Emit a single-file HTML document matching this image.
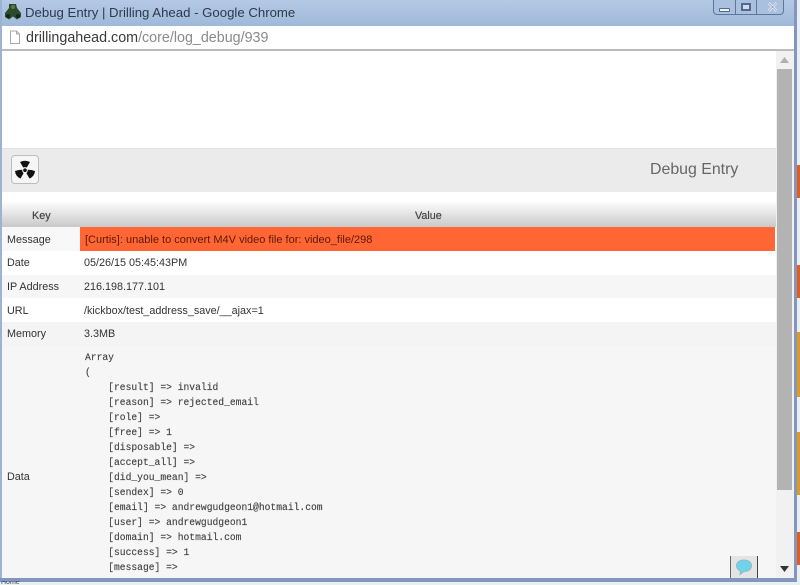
<!DOCTYPE html>
<html><head><meta charset="utf-8"><style>
html,body{margin:0;padding:0}
body{width:800px;height:585px;overflow:hidden;position:relative;background:#fff;font-family:"Liberation Sans",sans-serif}
.a{position:absolute}
.t{position:absolute;white-space:nowrap;font-size:10.8px;line-height:14px;color:#333}
.m{position:absolute;left:85px;white-space:pre;font:9.67px/15px "Liberation Mono",monospace;color:#3c3c3c;height:15px;-webkit-text-stroke:.15px #555}
</style></head><body>
<!-- window frame -->
<div class="a" style="left:0;top:0;width:797px;height:26px;background:linear-gradient(#b4c9e4,#9fb9da)"></div>
<div class="a" style="left:0;top:0;width:2px;height:580px;background:#9db3d3"></div>
<div class="a" style="left:794px;top:0;width:3px;height:580px;background:#8496bd"></div>
<div class="a" style="left:797px;top:0;width:3px;height:585px;background:#e8eef5"></div>
<div class="a" style="left:797px;top:165px;width:3px;height:33px;background:#dd5f24"></div>
<div class="a" style="left:797px;top:265px;width:3px;height:33px;background:#dd5f24"></div>
<div class="a" style="left:797px;top:332px;width:3px;height:65px;background:#dc9a26"></div>
<div class="a" style="left:797px;top:432px;width:3px;height:63px;background:#dc9a26"></div>
<div class="a" style="left:797px;top:532px;width:3px;height:33px;background:#dd5f24"></div>
<!-- title -->
<svg class="a" style="left:4px;top:3px" width="18" height="18" viewBox="0 0 18 18"><path d="M5 1h7l1 4 4 5v4l-4 2.500-4-3-4 3-4-2.500v-4l4-5z" fill="#2d4a2c"/><circle cx="9" cy="4" r="2" fill="#5d7a45"/><circle cx="4" cy="13" r="2" fill="#16261a"/><circle cx="14" cy="13" r="2" fill="#16261a"/></svg>
<div class="t" style="left:25px;top:4px;font-size:13.2px;line-height:18px;color:#2c3a4c">Debug Entry | Drilling Ahead - Google Chrome</div>
<!-- window controls -->
<div class="a" style="left:713px;top:0;width:69px;height:14px;background:#a9c1df;border:1px solid #5d7797;border-top:0;border-radius:0 0 4px 4px"></div>
<div class="a" style="left:735px;top:0;width:1px;height:14px;background:#5d7797"></div>
<div class="a" style="left:756px;top:0;width:1px;height:14px;background:#5d7797"></div>
<div class="a" style="left:719px;top:8px;width:9px;height:2px;background:#eef3f8;border:1px solid #53688a;border-radius:1px"></div>
<div class="a" style="left:741px;top:3px;width:6px;height:4px;background:#cfdcec;border:2px solid #53688a"></div>
<svg class="a" style="left:767px;top:2px" width="11" height="10" viewBox="0 0 11 10"><path d="M1.500 1L9.500 9M9.500 1L1.500 9" stroke="#e8eef5" stroke-width="2.500"/><path d="M1.500 1L9.500 9M9.500 1L1.500 9" stroke="#7d93b3" stroke-width=".6"/></svg>
<!-- address bar -->
<div class="a" style="left:2px;top:26px;width:792px;height:23px;background:#fff;border-bottom:2px solid #bdb9c0"></div>
<svg class="a" style="left:9px;top:30px" width="12" height="15" viewBox="0 0 12 15"><path d="M1.500 1h6l3 3v9.500h-9z" fill="#fff" stroke="#a8a8a8"/><path d="M7.500 1v3h3" fill="none" stroke="#a8a8a8"/></svg>
<div class="t" style="left:26px;top:28px;font-size:14.3px;line-height:20px;color:#3a3a3a">drillingahead.com<span style="color:#8a8a8a">/core/log_debug/939</span></div>
<!-- page -->
<div class="a" style="left:2px;top:51px;width:774px;height:97px;background:#fff"></div>
<div class="a" style="left:2px;top:148px;width:774px;height:44px;background:#ebebeb;border-top:1px solid #e2e2e2;box-sizing:border-box"></div>
<div class="a" style="left:11px;top:155px;width:26px;height:27px;background:#f6f6f6;border:1px solid #bdbdbd;border-radius:4px"></div>
<svg class="a" style="left:14px;top:159px" width="22" height="22" viewBox="0 0 22 22"><path d="M6 3Q11 .5 16 3L12.800 8.500Q11 7.800 9.200 8.500z" fill="#111"/><path d="M1 12Q5 10.800 8.200 10.800Q8.200 13 9.600 14.200L6.500 19.500Q1.500 17.500 1 12z" fill="#111"/><path d="M21 12Q17 10.800 13.800 10.800Q13.800 13 12.400 14.200L15.500 19.500Q20.500 17.500 21 12z" fill="#111"/><circle cx="11" cy="11.200" r="1.800" fill="#111"/></svg>
<div class="t" style="left:650px;top:160px;font-size:15.9px;line-height:20px;color:#666">Debug Entry</div>
<!-- table header -->
<div class="a" style="left:2px;top:192px;width:774px;height:35px;background:linear-gradient(#fff 0,#fff 25%,#c9c9c9 100%)"></div>
<div class="t" style="left:32px;top:209px;color:#444;text-shadow:0 0 .5px #555">Key</div>
<div class="t" style="left:415px;top:209px;color:#444;text-shadow:0 0 .5px #555">Value</div>
<!-- rows -->
<div class="a" style="left:2px;top:227px;width:78px;height:24px;background:#f8f8f8"></div>
<div class="a" style="left:80px;top:227px;width:695px;height:24px;background:#ff6633"></div>
<div class="a" style="left:2px;top:251px;width:774px;height:24px;background:#fff"></div>
<div class="a" style="left:2px;top:275px;width:774px;height:23px;background:#f6f6f6"></div>
<div class="a" style="left:2px;top:298px;width:774px;height:24px;background:#fff"></div>
<div class="a" style="left:2px;top:322px;width:774px;height:24px;background:#f4f4f4"></div>
<div class="a" style="left:2px;top:346px;width:774px;height:232px;background:#f6f6f6"></div>
<div class="t" style="left:7px;top:233px">Message</div>
<div class="t" style="left:85px;top:233px;font-size:11px;color:#5a1a08">[Curtis]: unable to convert M4V video file for: video_file/298</div>
<div class="t" style="left:7px;top:256px">Date</div>
<div class="t" style="left:84px;top:256px">05/26/15 05:45:43PM</div>
<div class="t" style="left:7px;top:280px">IP Address</div>
<div class="t" style="left:84px;top:280px">216.198.177.101</div>
<div class="t" style="left:7px;top:304px">URL</div>
<div class="t" style="left:84px;top:304px">/kickbox/test_address_save/__ajax=1</div>
<div class="t" style="left:7px;top:327px">Memory</div>
<div class="t" style="left:84px;top:327px">3.3MB</div>
<div class="t" style="left:7px;top:470px">Data</div>
<div class="m" style="top:350px">Array</div>
<div class="m" style="top:365px">(</div>
<div class="m" style="top:380px">    [result] =&gt; invalid</div>
<div class="m" style="top:395px">    [reason] =&gt; rejected_email</div>
<div class="m" style="top:410px">    [role] =&gt;</div>
<div class="m" style="top:425px">    [free] =&gt; 1</div>
<div class="m" style="top:440px">    [disposable] =&gt;</div>
<div class="m" style="top:455px">    [accept_all] =&gt;</div>
<div class="m" style="top:470px">    [did_you_mean] =&gt;</div>
<div class="m" style="top:485px">    [sendex] =&gt; 0</div>
<div class="m" style="top:500px">    [email] =&gt; andrewgudgeon1@hotmail.com</div>
<div class="m" style="top:515px">    [user] =&gt; andrewgudgeon1</div>
<div class="m" style="top:530px">    [domain] =&gt; hotmail.com</div>
<div class="m" style="top:545px">    [success] =&gt; 1</div>
<div class="m" style="top:560px">    [message] =&gt;</div>
<!-- scrollbar -->
<div class="a" style="left:776px;top:51px;width:18px;height:527px;background:#f1f1f1"></div>
<div class="a" style="left:777px;top:69px;width:15px;height:421px;background:#b3b3b3"></div>
<svg class="a" style="left:780px;top:57px" width="9" height="6"><path d="M4.500 0L9 6H0z" fill="#b0b0b0"/></svg>
<svg class="a" style="left:780px;top:566px" width="9" height="6"><path d="M4.500 6L9 0H0z" fill="#333"/></svg>
<!-- chat button -->
<div class="a" style="left:730px;top:556px;width:26px;height:22px;background:#e4e4e4;border-left:1px solid #666;border-right:1px solid #444"></div>
<svg class="a" style="left:735px;top:559px" width="18" height="17" viewBox="0 0 18 17"><path d="M9 1C4.500 1 1.500 3.500 1.500 6.800c0 2.500 1.800 4.300 4 5.200L5 15.500 9 12.500c4.500 0 7.500-2.500 7.500-5.700S13.500 1 9 1z" fill="#6fd3ea" stroke="#8fb9c9"/></svg>
<!-- bottom frame -->
<div class="a" style="left:0;top:578px;width:797px;height:4px;background:#8496bd"></div>
<div class="a" style="left:0;top:582px;width:797px;height:3px;background:#eaf0f2"></div>
<div class="t" style="left:1px;top:581px;font-size:7px;line-height:4px;color:#446;height:4px;overflow:hidden">Home</div>
</body></html>
